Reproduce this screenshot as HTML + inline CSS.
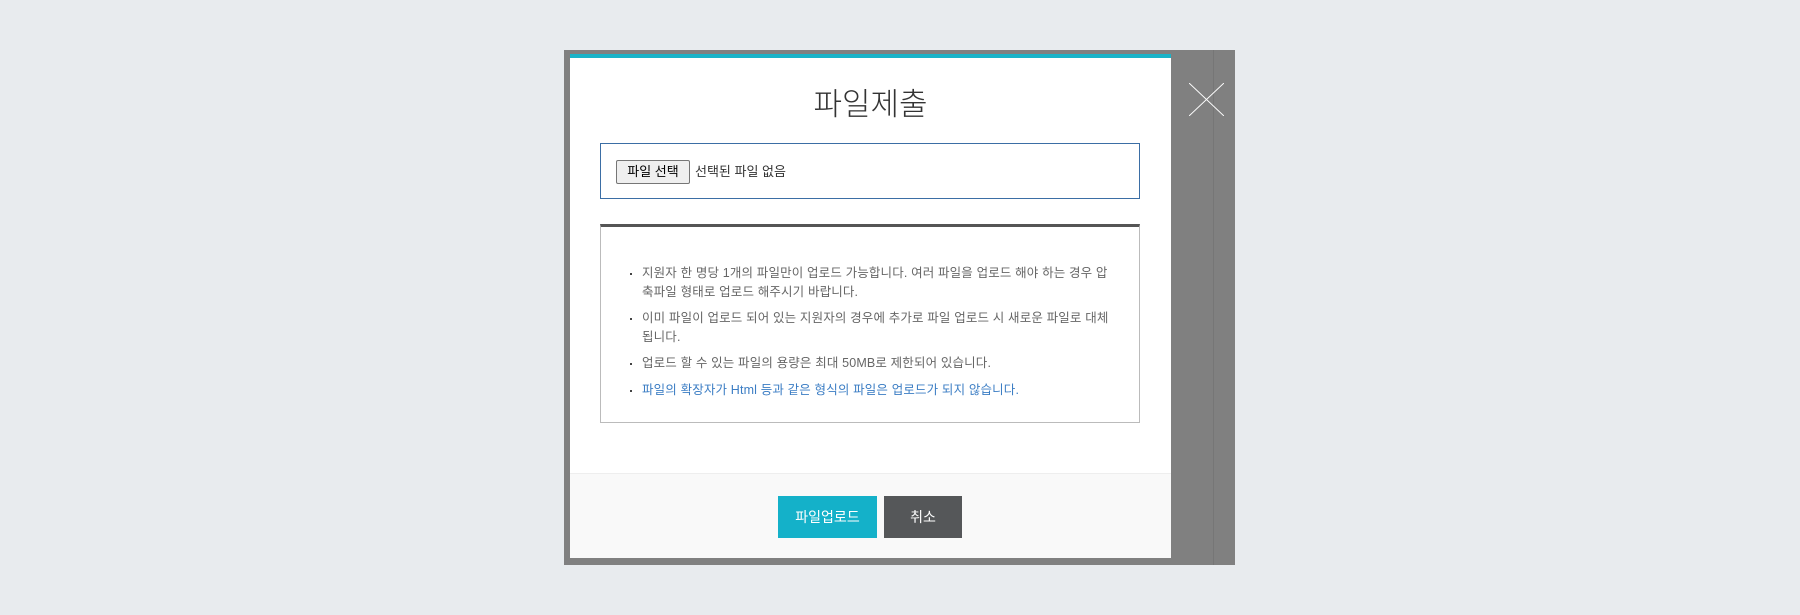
<!DOCTYPE html>
<html><head><meta charset="utf-8"><style>
*{margin:0;padding:0;box-sizing:border-box}
body{width:1800px;height:615px;background:#e8ebee;position:relative;overflow:hidden;font-family:"Liberation Sans","Noto Sans CJK KR",sans-serif}
.ov{position:absolute;left:564px;top:50px;width:671px;height:515px;background:#808080}
.vl{position:absolute;left:1213px;top:50px;width:1px;height:515px;background:#767676}
.m{position:absolute;left:570px;top:54px;width:601px;height:504px;background:#fff;border-top:4px solid #1ab3c8}
.t{position:absolute;top:21px;left:0;width:100%;text-align:center;font-size:31px;color:#333;font-weight:300}
.fb{position:absolute;left:30px;top:85px;width:540px;height:56px;border:1px solid #3b6ea5}
.btn{position:absolute;left:15px;top:16px;width:74px;height:24px;border:1px solid #767676;border-radius:2px;background:#efefef;font-size:13px;line-height:22px;text-align:center;color:#000}
.fn{position:absolute;left:94px;top:16px;line-height:24px;font-size:13px;color:#333}
.nb{position:absolute;left:30px;top:166px;width:540px;height:199px;border:1px solid #bbb;border-top:3px solid #555}
ul{list-style:none;position:absolute;left:29px;top:37px;width:500px;font-size:12.5px;color:#666;line-height:18.5px;letter-spacing:0.15px;white-space:nowrap}
li{position:relative;padding-left:12px;margin-bottom:8px}
li:before{content:"";position:absolute;left:0;top:9px;width:2px;height:2px;background:#444}
li.b{color:#3b7dc4}
.ft{position:absolute;left:0;top:415px;width:601px;height:85px;background:#f9f9f9;border-top:1px solid #eee}
.b1{position:absolute;left:208px;top:22px;width:99px;height:42px;background:#14b1c9;color:#fff;font-size:14px;line-height:42px;text-align:center}
.b2{position:absolute;left:314px;top:22px;width:78px;height:42px;background:#555759;color:#fff;font-size:14px;line-height:42px;text-align:center}
</style></head><body>
<div class="ov"></div><div class="vl"></div>
<svg style="position:absolute;left:1189px;top:83px" width="35" height="33"><path d="M0 0L35 33M35 0L0 33" stroke="#fff" stroke-width="1"/></svg>
<div class="m">
<div class="t">파일제출</div>
<div class="fb"><div class="btn">파일 선택</div><div class="fn">선택된 파일 없음</div></div>
<div class="nb"><ul>
<li>지원자 한 명당 1개의 파일만이 업로드 가능합니다. 여러 파일을 업로드 해야 하는 경우 압<br>축파일 형태로 업로드 해주시기 바랍니다.</li>
<li>이미 파일이 업로드 되어 있는 지원자의 경우에 추가로 파일 업로드 시 새로운 파일로 대체<br>됩니다.</li>
<li>업로드 할 수 있는 파일의 용량은 최대 50MB로 제한되어 있습니다.</li>
<li class="b">파일의 확장자가 Html 등과 같은 형식의 파일은 업로드가 되지 않습니다.</li>
</ul></div>
<div class="ft"><div class="b1">파일업로드</div><div class="b2">취소</div></div>
</div>
</body></html>
